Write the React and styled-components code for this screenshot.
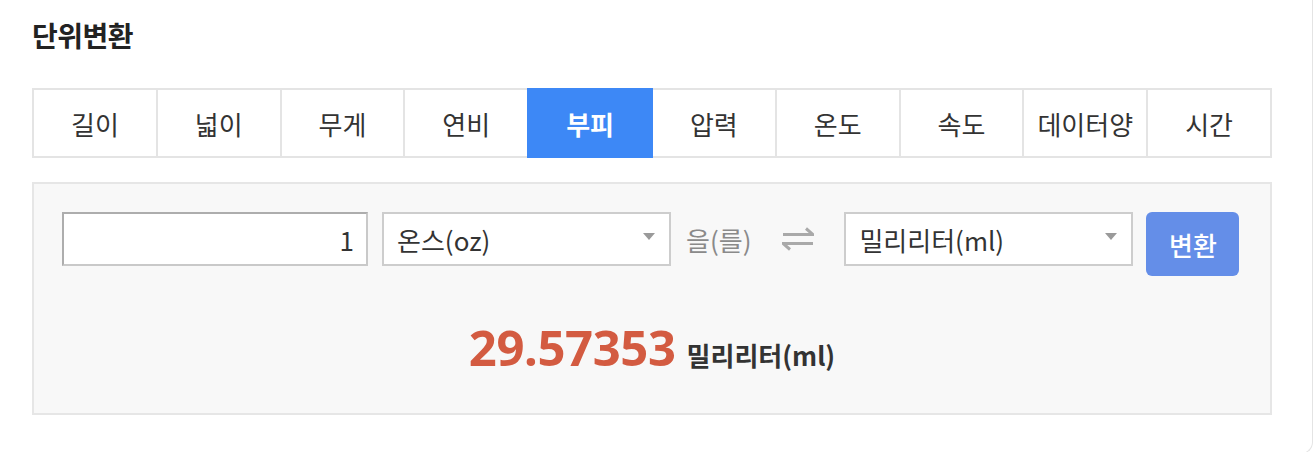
import React from "react";
import styled, { createGlobalStyle } from "styled-components";

const GlobalStyle = createGlobalStyle`
  html, body { margin: 0; padding: 0; background: #ffffff; }
  body {
    font-family: "Noto Sans CJK KR", "Noto Sans", sans-serif;
    color: #333;
  }
  * { box-sizing: border-box; }
`;

const Card = styled.div`
  width: 1313px;
  height: 454px;
  border-right: 1px solid #e4e4e4;
  border-bottom: 1px solid #e4e4e4;
  border-bottom-right-radius: 12px;
  padding: 14px 0 0 32px;
`;

const Title = styled.h2`
  margin: 0;
  font-size: 28px;
  font-weight: 700;
  line-height: 42px;
  color: #222;
  letter-spacing: -0.5px;
`;

const TabList = styled.div`
  display: flex;
  width: 1240px;
  margin-top: 32px;
`;

const Tab = styled.div`
  flex: 1;
  height: 70px;
  display: flex;
  align-items: center;
  justify-content: center;
  border: 2px solid ${(p) => (p.$active ? "#3d88f6" : "#e4e4e4")};
  background: ${(p) => (p.$active ? "#3d88f6" : "#fff")};
  color: ${(p) => (p.$active ? "#fff" : "#333")};
  font-weight: ${(p) => (p.$active ? 700 : 400)};
  font-size: 26px;
  margin-left: -2px;
  position: relative;
  z-index: ${(p) => (p.$active ? 1 : 0)};
  &:first-child { margin-left: 0; }
`;

const Panel = styled.div`
  width: 1240px;
  height: 233px;
  margin-top: 24px;
  background: #f8f8f8;
  border: 2px solid #e6e6e6;
  padding: 28px 0 0 28px;
`;

const Row = styled.div`
  display: flex;
  align-items: flex-start;
  gap: 14px;
`;

const NumberInput = styled.input`
  width: 306px;
  height: 54px;
  border: 2px solid #c9c9c9;
  border-top-color: #adadad;
  border-left-color: #adadad;
  background: #fff;
  text-align: right;
  padding: 0 12px 0 10px;
  font-family: inherit;
  font-size: 26px;
  color: #333;
  outline: none;
`;

const Select = styled.div`
  position: relative;
  width: 289px;
  height: 54px;
  border: 2px solid #cdcdcd;
  background: #fff;
  display: flex;
  align-items: center;
  padding-left: 13px;
  font-size: 26px;
  color: #333;
`;

const Caret = styled.span`
  position: absolute;
  right: 14px;
  top: 19px;
  width: 0;
  height: 0;
  border-left: 6px solid transparent;
  border-right: 6px solid transparent;
  border-top: 7px solid #9a9a9a;
`;

const Particle = styled.span`
  height: 54px;
  display: flex;
  align-items: center;
  font-size: 26px;
  color: #8a8a8a;
  margin-left: 1px;
`;

const SwapBox = styled.span`
  width: 65px;
  height: 54px;
  display: flex;
  align-items: center;
  justify-content: center;
`;

const ConvertButton = styled.button`
  width: 93px;
  height: 64px;
  margin-left: -1px;
  border: none;
  border-radius: 6px;
  background: #648ee8;
  color: #fff;
  font-family: inherit;
  font-size: 26px;
  font-weight: 500;
`;

const Result = styled.div`
  display: flex;
  align-items: baseline;
  justify-content: center;
  gap: 11px;
  margin-top: 47px;
  margin-left: -28px;
`;

const ResultValue = styled.span`
  font-family: "Noto Sans", "Noto Sans CJK KR", sans-serif;
  font-size: 49px;
  font-weight: 700;
  color: #d35b41;
  line-height: 1;
  letter-spacing: -0.4px;
`;

const ResultUnit = styled.span`
  font-size: 26px;
  font-weight: 700;
  color: #333;
  line-height: 1;
`;

const tabs = ["길이", "넓이", "무게", "연비", "부피", "압력", "온도", "속도", "데이터양", "시간"];

function SwapIcon() {
  return (
    <svg width="32" height="24" viewBox="0 0 32 24" fill="none">
      <path d="M1 7.5H31L24 1.5" stroke="#a9a9a9" strokeWidth="3" strokeLinejoin="miter" />
      <path d="M31 16.5H1L8 22.5" stroke="#a9a9a9" strokeWidth="3" strokeLinejoin="miter" />
    </svg>
  );
}

export default function App() {
  return (
    <>
      <GlobalStyle />
      <Card>
        <Title>단위변환</Title>
        <TabList>
          {tabs.map((t) => (
            <Tab key={t} $active={t === "부피"}>
              {t}
            </Tab>
          ))}
        </TabList>
        <Panel>
          <Row>
            <NumberInput defaultValue="1" />
            <Select>
              온스(oz)
              <Caret />
            </Select>
            <Particle>을(를)</Particle>
            <SwapBox>
              <SwapIcon />
            </SwapBox>
            <Select>
              밀리리터(ml)
              <Caret />
            </Select>
            <ConvertButton>변환</ConvertButton>
          </Row>
          <Result>
            <ResultValue>29.57353</ResultValue>
            <ResultUnit>밀리리터(ml)</ResultUnit>
          </Result>
        </Panel>
      </Card>
    </>
  );
}
